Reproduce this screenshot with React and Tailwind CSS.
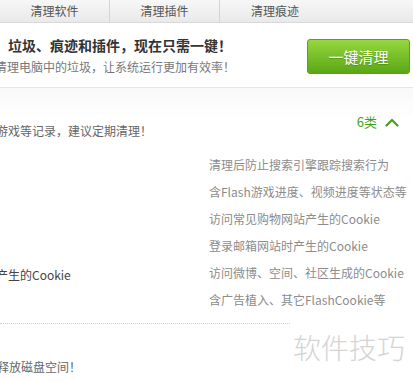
import React from "react";

const tabs = ["清理软件", "清理插件", "清理痕迹"];

const items = [
  "清理后防止搜索引擎跟踪搜索行为",
  "含Flash游戏进度、视频进度等状态等",
  "访问常见购物网站产生的Cookie",
  "登录邮箱网站时产生的Cookie",
  "访问微博、空间、社区生成的Cookie",
  "含广告植入、其它FlashCookie等",
];

const ChevronUp = () => (
  <svg width="14" height="10" viewBox="0 0 14 10" fill="none">
    <path d="M1.5 8.5 L7 3 L12.5 8.5" stroke="#4f9e22" strokeWidth="2.3" strokeLinecap="round" strokeLinejoin="round" />
  </svg>
);

const App = () => {
  return (
    <div className="relative w-[413px] h-[381px] overflow-hidden bg-white font-['Noto_Sans_CJK_SC','Noto_Sans',sans-serif]">
      {/* tab bar */}
      <div className="flex h-[23px] bg-gradient-to-b from-[#f7f7f7] to-[#e9e9e9] border-b border-[#d9d9d9]">
        {tabs.map((t, i) => (
          <div
            key={t}
            className={`w-[110px] flex items-center justify-center text-[12px] leading-none text-[#555] ${
              i < 2 ? "border-r border-[#d4d4d4]" : ""
            }`}
          >
            {t}
          </div>
        ))}
      </div>

      {/* header */}
      <div className="flex items-center justify-between h-[65px] border-b border-[#e6e6e6] pr-[3px]">
        <div className="flex flex-col">
          <div className="ml-[8px] text-[14px] leading-[20px] font-bold text-[#333]">
            垃圾、痕迹和插件，现在只需一键！
          </div>
          <div className="ml-[-5px] mt-[3px] text-[12px] leading-[18px] text-[#777]">
            清理电脑中的垃圾，让系统运行更加有效率！
          </div>
        </div>
        <button className="w-[103px] h-[35px] mt-[2px] rounded-[3px] border border-[#5b9f1d] bg-gradient-to-b from-[#96d73e] to-[#5aa713] text-white text-[15px] leading-none [text-shadow:0_1px_1px_rgba(0,0,0,0.2)]">
          一键清理
        </button>
      </div>

      {/* section header */}
      <div className="flex justify-between h-[63px] pt-[25px] pr-[14px] bg-gradient-to-b from-[#f9f9f9] via-white to-white">
        <div className="mt-[9px] ml-[-4px] text-[12px] leading-[18px] text-[#666]">
          游戏等记录，建议定期清理！
        </div>
        <div className="flex items-center gap-[8px] h-[18px]">
          <span className="text-[13px] leading-[18px] text-[#45a019]">6类</span>
          <ChevronUp />
        </div>
      </div>

      {/* list */}
      <div className="flex">
        <div className="w-[209px] pt-[115px]">
          <div className="ml-[-4px] text-[12px] leading-[18px] text-[#444]">产生的Cookie</div>
        </div>
        <div className="flex flex-col">
          {items.map((it) => (
            <div key={it} className="h-[27px] flex items-center text-[12px] text-[#8c8c8c] whitespace-nowrap">
              {it}
            </div>
          ))}
        </div>
      </div>

      <div className="w-[290px] mt-[10px] border-t border-dotted border-[#cfcfcf]" />

      <div className="mt-[34px] ml-[-3px] text-[12px] leading-[18px] text-[#666]">释放磁盘空间！</div>

      {/* watermark */}
      <div className="absolute left-[293px] top-[333px] text-[28px] leading-none font-light text-[#d4d4d4]">
        软件技巧
      </div>
    </div>
  );
};

export default App;
